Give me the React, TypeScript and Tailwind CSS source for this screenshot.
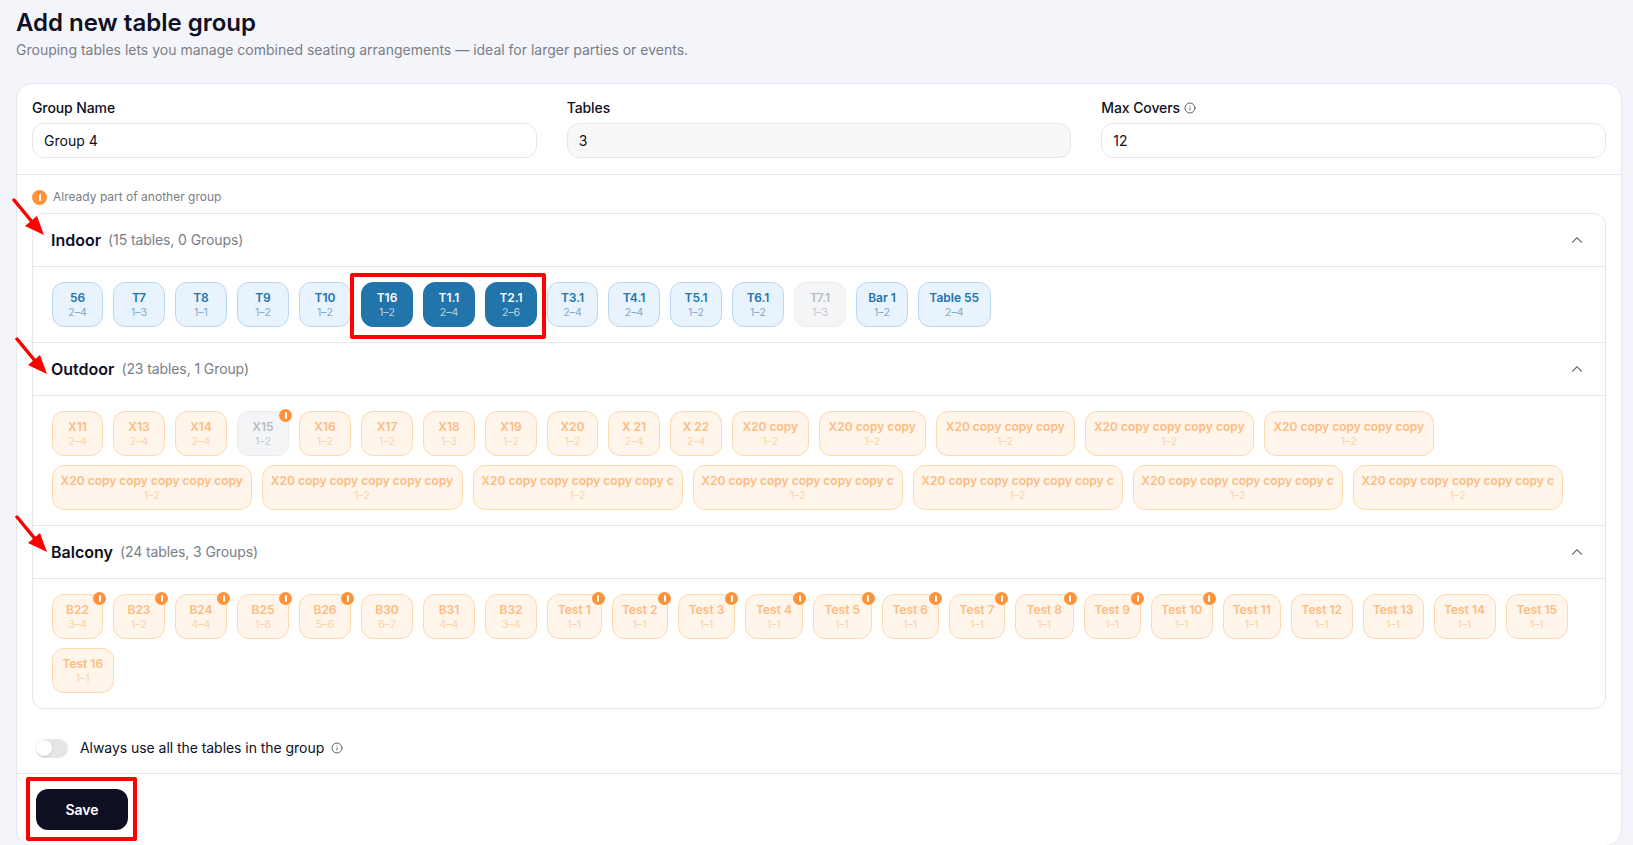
import { ChevronUp, Info } from 'lucide-react';

type Chip = {
  name: string;
  range: string;
  w: string;
  warn?: boolean;
  muted?: boolean;
  selected?: boolean;
};

const indoor: Chip[] = [
  { name: '56', range: '2–4', w: 'w-[51px]' },
  { name: 'T7', range: '1–3', w: 'w-[52px]' },
  { name: 'T8', range: '1–1', w: 'w-[52px]' },
  { name: 'T9', range: '1–2', w: 'w-[52px]' },
  { name: 'T10', range: '1–2', w: 'w-[52px]' },
  { name: 'T16', range: '1–2', w: 'w-[52px]', selected: true },
  { name: 'T1.1', range: '2–4', w: 'w-[52px]', selected: true },
  { name: 'T2.1', range: '2–6', w: 'w-[52px]', selected: true },
  { name: 'T3.1', range: '2–4', w: 'w-[51px]' },
  { name: 'T4.1', range: '2–4', w: 'w-[52px]' },
  { name: 'T5.1', range: '1–2', w: 'w-[52px]' },
  { name: 'T6.1', range: '1–2', w: 'w-[52px]' },
  { name: 'T7.1', range: '1–3', w: 'w-[52px]', muted: true },
  { name: 'Bar 1', range: '1–2', w: 'w-[52px]' },
  { name: 'Table 55', range: '2–4', w: 'w-[72.5px]' },
];

const outdoor: Chip[] = [
  { name: 'X11', range: '2–4', w: 'w-[51px]' },
  { name: 'X13', range: '2–4', w: 'w-[52px]' },
  { name: 'X14', range: '2–4', w: 'w-[52px]' },
  { name: 'X15', range: '1–2', w: 'w-[52px]', muted: true, warn: true },
  { name: 'X16', range: '1–2', w: 'w-[52px]' },
  { name: 'X17', range: '1–2', w: 'w-[52px]' },
  { name: 'X18', range: '1–3', w: 'w-[52px]' },
  { name: 'X19', range: '1–2', w: 'w-[52px]' },
  { name: 'X20', range: '1–2', w: 'w-[51px]' },
  { name: 'X 21', range: '2–4', w: 'w-[52px]' },
  { name: 'X 22', range: '2–4', w: 'w-[52px]' },
  { name: 'X20 copy', range: '1–2', w: 'w-[76.5px]' },
  { name: 'X20 copy copy', range: '1–2', w: 'w-[107.5px]' },
  { name: 'X20 copy copy copy', range: '1–2', w: 'w-[138.5px]' },
  { name: 'X20 copy copy copy copy', range: '1–2', w: 'w-[169.5px]' },
  { name: 'X20 copy copy copy copy', range: '1–2', w: 'w-[169.5px]' },
  { name: 'X20 copy copy copy copy copy', range: '1–2', w: 'w-[199.5px]' },
  { name: 'X20 copy copy copy copy copy', range: '1–2', w: 'w-[201px]' },
  { name: 'X20 copy copy copy copy copy c', range: '1–2', w: 'w-[210px]' },
  { name: 'X20 copy copy copy copy copy c', range: '1–2', w: 'w-[210px]' },
  { name: 'X20 copy copy copy copy copy c', range: '1–2', w: 'w-[210px]' },
  { name: 'X20 copy copy copy copy copy c', range: '1–2', w: 'w-[210px]' },
  { name: 'X20 copy copy copy copy copy c', range: '1–2', w: 'w-[210.5px]' },
];

const balcony: Chip[] = [
  { name: 'B22', range: '3–4', w: 'w-[51px]', warn: true },
  { name: 'B23', range: '1–2', w: 'w-[52px]', warn: true },
  { name: 'B24', range: '4–4', w: 'w-[52px]', warn: true },
  { name: 'B25', range: '1–8', w: 'w-[52px]', warn: true },
  { name: 'B26', range: '5–6', w: 'w-[52px]', warn: true },
  { name: 'B30', range: '6–7', w: 'w-[52px]' },
  { name: 'B31', range: '4–4', w: 'w-[52px]' },
  { name: 'B32', range: '3–4', w: 'w-[52px]' },
  { name: 'Test 1', range: '1–1', w: 'w-[54.5px]', warn: true },
  { name: 'Test 2', range: '1–1', w: 'w-[56.5px]', warn: true },
  { name: 'Test 3', range: '1–1', w: 'w-[57px]', warn: true },
  { name: 'Test 4', range: '1–1', w: 'w-[58px]', warn: true },
  { name: 'Test 5', range: '1–1', w: 'w-[58.5px]', warn: true },
  { name: 'Test 6', range: '1–1', w: 'w-[57.5px]', warn: true },
  { name: 'Test 7', range: '1–1', w: 'w-[56px]', warn: true },
  { name: 'Test 8', range: '1–1', w: 'w-[58.5px]', warn: true },
  { name: 'Test 9', range: '1–1', w: 'w-[57.5px]', warn: true },
  { name: 'Test 10', range: '1–1', w: 'w-[61.5px]', warn: true },
  { name: 'Test 11', range: '1–1', w: 'w-[58.5px]' },
  { name: 'Test 12', range: '1–1', w: 'w-[61.5px]' },
  { name: 'Test 13', range: '1–1', w: 'w-[61px]' },
  { name: 'Test 14', range: '1–1', w: 'w-[62px]' },
  { name: 'Test 15', range: '1–1', w: 'w-[62.5px]' },
  { name: 'Test 16', range: '1–1', w: 'w-[61.5px]' },
];

function WarnDot({ className }: { className: string }) {
  return (
    <span className={`flex items-center justify-center rounded-full bg-[#ff9238] ${className}`}>
      <span className="h-[7px] w-[2px] rounded-full bg-white" />
    </span>
  );
}

function TableChip({ chip, tone }: { chip: Chip; tone: 'blue' | 'orange' }) {
  let box = 'border-[#b9d7f2] bg-[#e8f3fd]';
  let name = 'text-[#2274aa]';
  let range = 'text-[#7ea8cd]';
  if (tone === 'orange') {
    box = 'border-[#fdd9ad] bg-[#fff5eb]';
    name = 'text-[#fdbb80]';
    range = 'text-[#fcd2a6]';
  }
  if (chip.muted) {
    box = 'border-[#e9ebef] bg-[#f4f5f7]';
    name = 'text-[#b9bcc4]';
    range = 'text-[#c6c9cf]';
  }
  if (chip.selected) {
    box = 'border-[#2175ab] bg-[#2175ab]';
    name = 'text-white';
    range = 'text-white/70';
  }
  return (
    <div className={`relative flex h-[45px] flex-col items-center justify-center rounded-xl border ${chip.w} ${box}`}>
      <span className={`whitespace-nowrap text-xs leading-[15px] font-semibold ${name}`}>{chip.name}</span>
      <span className={`text-[10.5px] leading-[15px] ${range}`}>{chip.range}</span>
      {chip.warn && <WarnDot className="absolute -top-[3px] -right-[4px] h-[13px] w-[13px]" />}
    </div>
  );
}

function Section({ title, count, chips, tone }: { title: string; count: string; chips: Chip[]; tone: 'blue' | 'orange' }) {
  return (
    <div className="border-b border-[#e5e7eb] last:border-b-0">
      <div className="flex h-[53px] items-center justify-between border-b border-[#e5e7eb] pr-[19px] pl-[18px]">
        <div className="flex items-center gap-[7px]">
          <span className="text-base font-semibold text-[#0e0f23]">{title}</span>
          <span className="text-sm tracking-[-0.1px] text-[#7a7d85]">{count}</span>
        </div>
        <ChevronUp size={18} strokeWidth={1.5} className="text-[#6b7280]" />
      </div>
      <div className="flex flex-wrap gap-x-[10px] gap-y-[9px] px-[19px] py-[15px]">
        {chips.map((chip, i) => (
          <TableChip key={i} chip={chip} tone={tone} />
        ))}
      </div>
    </div>
  );
}

function Field({ label, value, info, disabled }: { label: string; value: string; info?: boolean; disabled?: boolean }) {
  return (
    <div>
      <label className="flex h-5 items-center gap-1 text-sm font-medium tracking-[-0.1px] text-[#0e0f23]">
        {label}
        {info && <Info size={12} className="text-[#5f6368]" />}
      </label>
      <input
        readOnly
        value={value}
        className={`mt-[5px] h-[35px] w-full rounded-xl border border-[#e5e7eb] px-[11px] text-sm text-[#0e0f23] outline-none ${disabled ? 'bg-[#f8f8f8]' : 'bg-white'}`}
      />
    </div>
  );
}

function RedArrow({ className }: { className: string }) {
  return (
    <svg viewBox="0 0 36 40" className={`absolute h-[40px] w-[36px] ${className}`}>
      <path d="M2 2 L21 25" stroke="#ff0000" strokeWidth="3.5" strokeLinecap="round" />
      <path d="M32 37 L13 28 L25 18 Z" fill="#ff0000" />
    </svg>
  );
}

export default function App() {
  return (
    <div className="relative h-[845px] overflow-hidden bg-[#f4f5fb] pr-[11px] pl-4 font-['Inter',sans-serif]">
      <h1 className="pt-[7px] text-2xl leading-8 font-semibold text-[#0e0f23]">Add new table group</h1>
      <p className="mt-px text-sm leading-5 text-[#7a7d85]">
        Grouping tables lets you manage combined seating arrangements — ideal for larger parties or events.
      </p>

      <div className="mt-[23px] rounded-2xl border border-[#e5e7eb] bg-white">
        <div className="grid grid-cols-3 gap-[30px] border-b border-[#e5e7eb] px-[15px] pt-[14px] pb-[16px]">
          <Field label="Group Name" value="Group 4" />
          <Field label="Tables" value="3" disabled />
          <Field label="Max Covers" value="12" info />
        </div>

        <div className="px-[15px]">
          <div className="flex h-[38px] items-center gap-[6px] pt-[6px]">
            <WarnDot className="h-[15px] w-[15px]" />
            <span className="text-xs text-[#7a7d85]">Already part of another group</span>
          </div>
          <div className="rounded-xl border border-[#e5e7eb]">
            <Section title="Indoor" count="(15 tables, 0 Groups)" chips={indoor} tone="blue" />
            <Section title="Outdoor" count="(23 tables, 1 Group)" chips={outdoor} tone="orange" />
            <Section title="Balcony" count="(24 tables, 3 Groups)" chips={balcony} tone="orange" />
          </div>
        </div>

        <div className="flex h-[65px] items-center gap-3 border-b border-[#e5e7eb] pt-[14px] pl-[19px]">
          <span className="flex h-[19px] w-[32px] items-center rounded-full bg-[#e5e5e5]">
            <span className="h-4 w-4 rounded-full bg-white shadow" />
          </span>
          <span className="text-sm tracking-[-0.05px] text-[#0e0f23]">Always use all the tables in the group</span>
          <Info size={12} className="-ml-[5px] text-[#5f6368]" />
        </div>

        <div className="px-[19px] pt-[15px] pb-[15px]">
          <button className="h-[41px] w-[92px] rounded-xl bg-[#0e0f23] text-sm font-semibold text-white">Save</button>
        </div>
      </div>

      {/* annotations drawn over the screenshot */}
      <RedArrow className="top-[198px] left-[12px]" />
      <RedArrow className="top-[337px] left-[15px]" />
      <RedArrow className="top-[515px] left-[15px]" />
      <div className="absolute top-[273px] left-[350px] h-[66px] w-[196px] rounded-[2px] border-4 border-[#ff0000]" />
      <div className="absolute top-[777px] left-[26px] h-[64px] w-[111px] rounded-[2px] border-4 border-[#ff0000]" />
    </div>
  );
}
